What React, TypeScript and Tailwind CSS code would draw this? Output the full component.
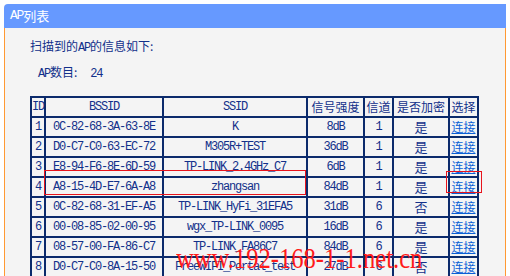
import React from 'react';

type Row = {
    id: number;
    bssid: string;
    ssid: string;
    signal: string;
    channel: string;
    secure: string;
};

const rows: Row[] = [
    { id: 1, bssid: '0C-82-68-3A-63-8E', ssid: 'K', signal: '8dB', channel: '1', secure: '是' },
    { id: 2, bssid: 'D0-C7-C0-63-EC-72', ssid: 'M305R+TEST', signal: '36dB', channel: '1', secure: '是' },
    { id: 3, bssid: 'E8-94-F6-8E-6D-59', ssid: 'TP-LINK_2.4GHz_C7', signal: '6dB', channel: '1', secure: '是' },
    { id: 4, bssid: 'A8-15-4D-E7-6A-A8', ssid: 'zhangsan', signal: '84dB', channel: '1', secure: '是' },
    { id: 5, bssid: '0C-82-68-31-EF-A5', ssid: 'TP-LINK_HyFi_31EFA5', signal: '31dB', channel: '6', secure: '否' },
    { id: 6, bssid: '00-08-85-02-00-95', ssid: 'wgx_TP-LINK_0095', signal: '16dB', channel: '6', secure: '是' },
    { id: 7, bssid: '08-57-00-FA-86-C7', ssid: 'TP-LINK_FA86C7', signal: '84dB', channel: '6', secure: '是' },
    { id: 8, bssid: 'D0-C7-C0-8A-15-50', ssid: 'FreeWIFI_Portal_test', signal: '27dB', channel: '6', secure: '否' },
];

// latin text in the narrow mono face
const M: React.FC<{ children: React.ReactNode }> = ({ children }) => (
    <span className="font-['Liberation_Mono',monospace] tracking-[-1.2px]">{children}</span>
);

const Cell: React.FC<{ children?: React.ReactNode }> = ({ children }) => (
    <div className="h-[18px] bg-[#f4f4f4] flex items-center justify-center leading-[18px] whitespace-nowrap overflow-hidden">
        {children}
    </div>
);

const App: React.FC = () => {
    return (
        <div className="relative w-[510px] h-[276px] overflow-hidden bg-white pt-[4px] pl-[4px] text-[12px] text-[#12308a] font-['Noto_Sans_CJK_SC',sans-serif]">
            <div className="w-[502px]">
                <div className="h-[24px] bg-[#6699ff] rounded-tl-[4px] pl-[6px] flex items-center text-white text-[13px]">
                    <M>AP</M>
                    <span>列表</span>
                </div>
                <div className="h-[260px] bg-[#f4f4f4] border-l border-r border-[#ff9933] pl-[25px] pt-[10px]">
                    <div className="leading-[16px]">
                        扫描到的<M>AP</M>的信息如下:
                    </div>
                    <div className="leading-[16px] mt-[8px] pl-[8px]">
                        <M>AP</M>数目:
                        <span className="ml-[13px]">
                            <M>24</M>
                        </span>
                    </div>

                    <div className="mt-[14px] w-fit grid grid-cols-[12px_116px_142px_55px_27px_54px_27px] gap-[2px] p-[2px] bg-[#0b2a6b]">
                        <Cell><M>ID</M></Cell>
                        <Cell><M>BSSID</M></Cell>
                        <Cell><M>SSID</M></Cell>
                        <Cell>信号强度</Cell>
                        <Cell>信道</Cell>
                        <Cell>是否加密</Cell>
                        <Cell>选择</Cell>
                        {rows.map((r) => (
                            <React.Fragment key={r.id}>
                                <Cell><M>{r.id}</M></Cell>
                                <Cell><M>{r.bssid}</M></Cell>
                                <Cell><M>{r.ssid}</M></Cell>
                                <Cell><M>{r.signal}</M></Cell>
                                <Cell><M>{r.channel}</M></Cell>
                                <Cell><span className="text-[13px]">{r.secure}</span></Cell>
                                <Cell>
                                    <a href="#" className="text-[#0a5fd6] underline">连接</a>
                                </Cell>
                            </React.Fragment>
                        ))}
                        {/* next row starts at the bottom edge */}
                        <Cell />
                        <Cell />
                        <Cell />
                        <Cell />
                        <Cell />
                        <Cell />
                        <Cell />
                    </div>
                </div>
            </div>

            {/* highlight boxes */}
            <div className="absolute left-[44px] top-[170px] w-[262px] h-[25px] border border-[#e8141c]" />
            <div className="absolute left-[446px] top-[171px] w-[36px] h-[22px] border border-[#e8141c]" />

            {/* site stamp */}
            <div className="absolute left-[176px] top-[243px] whitespace-nowrap origin-left scale-x-[0.82] leading-none text-[30px] text-[#ff1a1a] font-['Liberation_Serif',serif]">
                www.192-168-1-1.net.cn
            </div>
        </div>
    );
};

export default App;
